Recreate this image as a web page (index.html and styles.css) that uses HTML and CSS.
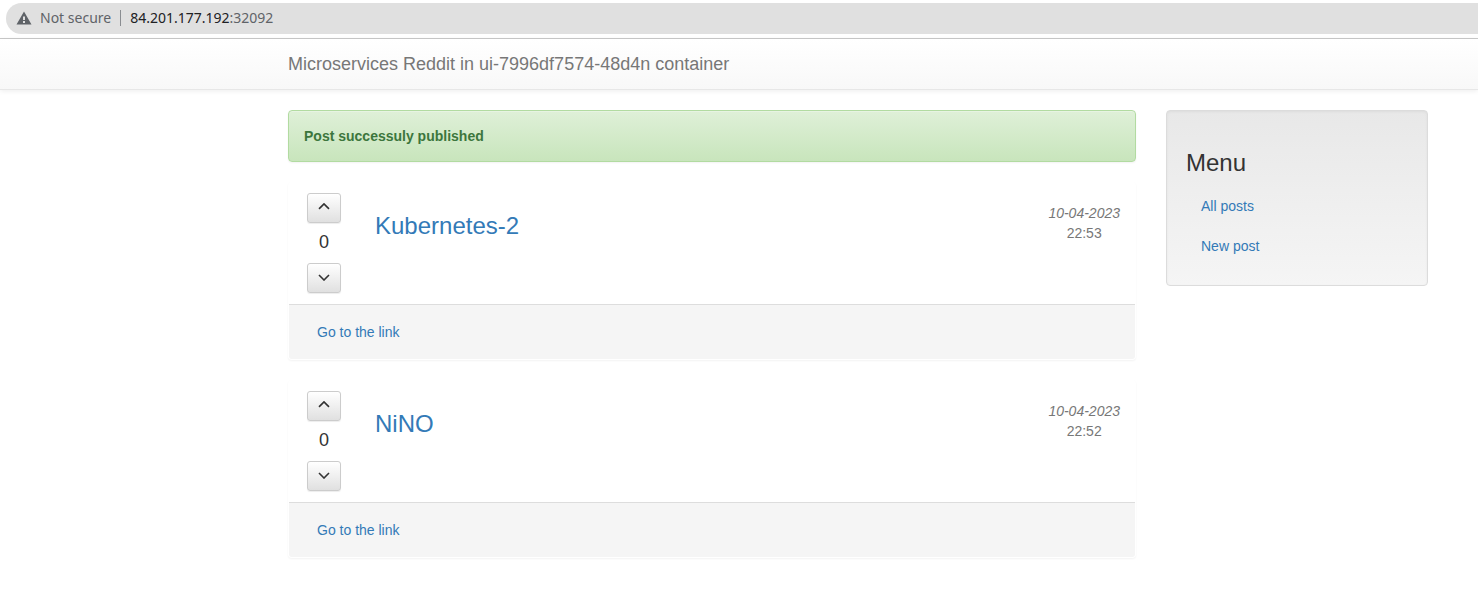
FILE: index.html
```
<!DOCTYPE html>
<html lang="en">
<head>
<meta charset="utf-8">
<title>Microservices Reddit</title>
<link rel="stylesheet" href="styles.css">
</head>
<body>
<div class="toolbar">
  <div class="address">
    <svg class="warning" viewBox="0 0 16 14" aria-hidden="true"><path fill="#5f6368" fill-rule="evenodd" d="M8 0.5 15.5 13.5H0.5ZM7 5.5V9H9V5.5ZM7 10V12H9V10Z"/></svg>
    <span class="security">Not secure</span>
    <span class="url"><span class="host">84.201.177.192</span>:32092</span>
  </div>
</div>
<nav class="navbar"><a class="brand" href="#">Microservices Reddit in ui-7996df7574-48d4n container</a></nav>
<div class="container">
  <main>
    <div class="alert" role="status"><strong>Post successuly published</strong></div>
    <article class="panel">
      <div class="panel-body">
        <div class="votes">
          <button class="vote" type="button" aria-label="Upvote"><svg viewBox="0 0 12 8"><path d="M1 5.9 6 0.9 11 5.9"/></svg></button>
          <span class="score">0</span>
          <button class="vote" type="button" aria-label="Downvote"><svg viewBox="0 0 12 8"><path d="M1 2 6 7 11 2"/></svg></button>
        </div>
        <h3 class="title"><a href="#">Kubernetes-2</a></h3>
        <div class="date"><em>10-04-2023</em><span>22:53</span></div>
      </div>
      <div class="panel-footer"><a href="#">Go to the link</a></div>
    </article>
    <article class="panel">
      <div class="panel-body">
        <div class="votes">
          <button class="vote" type="button" aria-label="Upvote"><svg viewBox="0 0 12 8"><path d="M1 5.9 6 0.9 11 5.9"/></svg></button>
          <span class="score">0</span>
          <button class="vote" type="button" aria-label="Downvote"><svg viewBox="0 0 12 8"><path d="M1 2 6 7 11 2"/></svg></button>
        </div>
        <h3 class="title"><a href="#">NiNO</a></h3>
        <div class="date"><em>10-04-2023</em><span>22:52</span></div>
      </div>
      <div class="panel-footer"><a href="#">Go to the link</a></div>
    </article>
  </main>
  <aside class="well">
    <h3>Menu</h3>
    <nav class="menu">
      <a href="#">All posts</a>
      <a href="#">New post</a>
    </nav>
  </aside>
</div>
</body>
</html>
```
FILE: styles.css
```
* { box-sizing: border-box; }
body {
  margin: 0;
  background: #fff;
  color: #333;
  font: 14px/20px "Liberation Sans", Arial, sans-serif;
}
a { color: #337ab7; text-decoration: none; }

.toolbar {
  padding: 3px 0 4px 6px;
  border-bottom: 1px solid #c9c9c9;
}
.address {
  display: flex;
  align-items: center;
  height: 31px;
  padding: 0 0 2px 10px;
  border-radius: 16px 0 0 16px;
  background: #e0e0e0;
  color: #5f6368;
  font-family: "Noto Sans", sans-serif;
}
.warning { width: 16px; height: 14px; margin-right: 8px; }
.security { line-height: 16px; padding-right: 9px; border-right: 1px solid #8a8d91; }
.url { padding-left: 9px; }
.host { color: #202124; }

.navbar {
  padding: 15px 50px 15px 288px;
  border-bottom: 1px solid #e7e7e7;
  background: linear-gradient(#fff, #f8f8f8);
  box-shadow: 0 1px 5px rgba(0, 0, 0, .075);
}
.brand { display: block; color: #777; font-size: 18px; }

.container {
  display: grid;
  grid-template-columns: minmax(0, 848fr) minmax(0, 262fr);
  align-items: start;
  gap: 30px;
  padding: 20px 50px 20px 288px;
}
.alert {
  padding: 15px;
  margin-bottom: 20px;
  border: 1px solid #b2dba1;
  border-radius: 4px;
  background: linear-gradient(#dff0d8, #c8e5bc);
  box-shadow: inset 0 1px 0 rgba(255, 255, 255, .25), 0 1px 2px rgba(0, 0, 0, .05);
  color: #3c763d;
}

.panel {
  margin-bottom: 20px;
  border: 1px solid transparent;
  border-radius: 4px;
  box-shadow: 0 1px 2px rgba(0, 0, 0, .05);
}
.panel-body {
  display: flex;
  align-items: flex-start;
  padding: 10px 15px 11px 18px;
}
.votes {
  display: flex;
  flex-direction: column;
  align-items: center;
  gap: 10px;
  width: 34px;
  margin-right: 34px;
}
.vote {
  display: flex;
  align-items: center;
  justify-content: center;
  width: 34px;
  height: 30px;
  padding: 0 0 2px;
  border: 1px solid #ccc;
  border-radius: 3px;
  background: linear-gradient(#fff, #e0e0e0);
  box-shadow: inset 0 1px 0 rgba(255, 255, 255, .15), 0 1px 1px rgba(0, 0, 0, .075);
}
.vote svg { width: 12px; height: 8px; fill: none; stroke: #333; stroke-width: 1.6; }
.score { padding-bottom: 2px; font-size: 18px; line-height: 18px; }
.title { flex: 1; margin: 20px 0 0; font-size: 24px; line-height: 26px; font-weight: 400; }
.date {
  display: flex;
  flex-direction: column;
  align-items: center;
  padding-top: 10px;
  color: #777;
}
.panel-footer {
  padding: 17px 28px;
  border-top: 1px solid #ddd;
  border-radius: 0 0 3px 3px;
  background: #f5f5f5;
}

.well {
  padding: 19px;
  border: 1px solid #dcdcdc;
  border-radius: 4px;
  background: linear-gradient(#e8e8e8, #f5f5f5);
  box-shadow: inset 0 1px 3px rgba(0, 0, 0, .05), 0 1px 0 rgba(255, 255, 255, .1);
}
.well h3 { margin: 20px 0 10px; font-size: 24px; line-height: 26px; font-weight: 400; }
.menu a { display: block; padding: 10px 15px; }
```
